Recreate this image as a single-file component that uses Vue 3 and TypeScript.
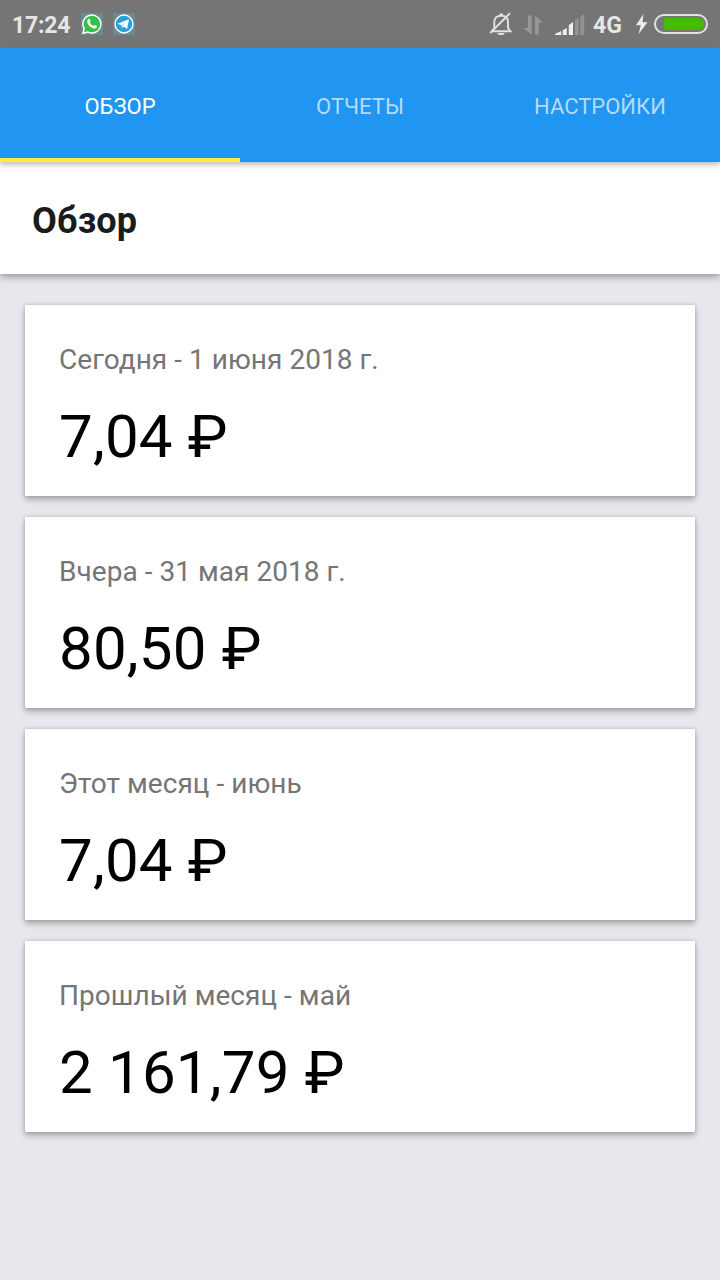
<script setup lang="ts">
interface Summary {
  label: string
  amount: string
}

const tabs: string[] = ['ОБЗОР', 'ОТЧЕТЫ', 'НАСТРОЙКИ']
const summaries: Summary[] = [
  { label: 'Сегодня - 1 июня 2018 г.', amount: '7,04 ₽' },
  { label: 'Вчера - 31 мая 2018 г.', amount: '80,50 ₽' },
  { label: 'Этот месяц - июнь', amount: '7,04 ₽' },
  { label: 'Прошлый месяц - май', amount: '2 161,79 ₽' },
]
</script>

<template>
  <div class="screen">
    <div class="status">
      <span class="clock">17:24</span>
      <svg class="app-icon" viewBox="0 0 22 22">
        <rect width="22" height="22" fill="#6f8793" />
        <path d="M2 20.3 3.2 15.7A9 9 0 1 1 7 19.1Z" fill="#35c04c" stroke="#fff" stroke-width="1.5" />
        <path d="M7.2 6.3c.7-.7 1.4-.5 1.7.2l.7 1.6c.2.5-.8 1.2-.6 1.6.7 1.5 1.8 2.5 3.3 3.1.5.2 1-1.1 1.5-.9l1.8.9c.7.4.2 1.7-.5 2.2-3 1.9-9.6-3.3-8.8-7 .1-.7.4-1.2.9-1.7Z" fill="#fff" />
      </svg>
      <svg class="app-icon" viewBox="0 0 22 22">
        <rect width="22" height="22" fill="#6f8793" />
        <circle cx="11" cy="11" r="9" fill="#2aa1da" stroke="#fff" stroke-width="1.4" />
        <path d="M4.5 10.7 16 6.2 14.1 15.9 10.8 13.5 9.1 15.2 8.5 12.2Z" fill="#fff" />
        <path d="M8.5 12.2 13.6 8.4 9.7 12.8 9.1 15.2Z" fill="#b5d5e8" />
      </svg>
      <span class="spacer"></span>
      <svg class="bell" viewBox="0 0 24 26" fill="none" stroke="#e2e2e2" stroke-width="1.9">
        <path d="M3 20.2H21.5L19 17V11C19 6.8 16.4 4.7 12.2 4.7S5.3 6.8 5.3 11V17L3 20.2" />
        <path d="M1.2 22 21 2.2" />
        <path d="M8 22h8l-2 2h-4zM10.5 2.5h3.4v2h-3.4z" fill="#e2e2e2" stroke="none" />
      </svg>
      <svg class="transfer" viewBox="0 0 22 22" fill="#989898">
        <path d="M5.2 1H9v20.3L.6 14.2H5.2ZM12.6 21.3V1L21 8.3H16.4V21.3Z" />
      </svg>
      <svg class="signal" viewBox="0 0 30 22">
        <path d="M0 21V20L6.3 17V21Z M7.8 21V16.2L11.7 14V21Z M13.8 21V11L18 8V21Z" fill="#f0f0f0" />
        <path d="M20 21V6L23.7 3.8V21Z M25.3 21V2.6L29.2 .5V21Z" fill="#929292" />
      </svg>
      <span class="network">4G</span>
      <svg class="bolt" viewBox="0 0 12 20"><path d="M7.4 0 0 11.3H4.8L2.6 20 11.5 8.2H6.5Z" fill="#ededed" /></svg>
      <svg class="battery" viewBox="0 0 54 20">
        <rect x="1" y="1" width="52" height="18" rx="9" fill="#777" stroke="#e2e2e2" stroke-width="2" />
        <path d="M10 4H44.5A6 6 0 0 1 44.5 16H10Z" fill="#43bc00" />
        <path d="M8 4.7Q4.2 6 4.2 10T8 15.3Z" fill="#777587" />
      </svg>
    </div>
    <nav class="tabs">
      <div v-for="(tab, i) in tabs" :key="tab" class="tab" :class="{ active: i === 0 }">{{ tab }}</div>
    </nav>
    <header class="heading"><h1>Обзор</h1></header>
    <main class="cards">
      <section v-for="item in summaries" :key="item.label" class="card">
        <div class="label">{{ item.label }}</div>
        <div class="amount">{{ item.amount }}</div>
      </section>
    </main>
  </div>
</template>

<style>
body { background: #e6e8ed; }
</style>

<style scoped>
.screen {
  width: 720px;
  height: 1280px;
  overflow: hidden;
  background: #e6e8ed;
  font-family: Roboto, "Noto Sans", sans-serif;
}
.status {
  display: flex;
  align-items: center;
  box-sizing: border-box;
  height: 48px;
  padding: 0 12px;
  background: #757575;
  color: #e6e6e6;
}
svg { display: block; flex: none; }
.clock { width: 69px; font-size: 23px; font-weight: 700; letter-spacing: -.2px; line-height: 46px; padding-top: 3px; white-space: nowrap; }
.app-icon { width: 22px; height: 22px; margin-right: 10px; }
.spacer { flex: 1; }
.bell { width: 24px; height: 26px; margin-right: 10px; }
.transfer { width: 21px; height: 22px; margin: 2px 11px 0 0; }
.signal { width: 30px; height: 22px; margin: 2px 8px 0 0; }
.network { width: 43px; font-size: 23px; font-weight: 700; line-height: 46px; padding-top: 3px; }
.bolt { width: 12px; height: 20px; margin-right: 6px; }
.battery { width: 54px; height: 20px; }
.tabs {
  position: relative;
  z-index: 2;
  display: flex;
  height: 114px;
  background: #2095f2;
  box-shadow: 0 3px 5px rgba(0, 0, 0, .25);
}
.tab {
  flex: 1;
  box-sizing: border-box;
  border-bottom: 4px solid transparent;
  color: #b5dbfa;
  font-size: 22px;
  line-height: 118px;
  height: 114px;
  text-align: center;
}
.active { color: #fff; border-color: #ffeb3b; }
.heading {
  position: relative;
  z-index: 1;
  height: 112px;
  background: #fff;
  box-shadow: 0 3px 7px rgba(0, 0, 0, .35);
}
h1 { margin: 0; padding-left: 32px; color: #1b1b1b; font-size: 36px; font-weight: 700; letter-spacing: .15px; line-height: 119px; }
.cards { display: flex; flex-direction: column; gap: 21px; padding: 31px 25px 0; }
.card {
  box-sizing: border-box;
  height: 191px;
  padding: 35px 34px 0;
  border-radius: 1px;
  background: #fff;
  box-shadow: 0 4px 6px rgba(0, 0, 0, .24), 0 0 4px rgba(0, 0, 0, .2);
}
.label { color: #757575; font-size: 28px; letter-spacing: .04px; line-height: 40px; white-space: nowrap; }
.amount { margin-top: 21px; color: #000; font-size: 60px; letter-spacing: .2px; line-height: 71px; white-space: nowrap; }
</style>
